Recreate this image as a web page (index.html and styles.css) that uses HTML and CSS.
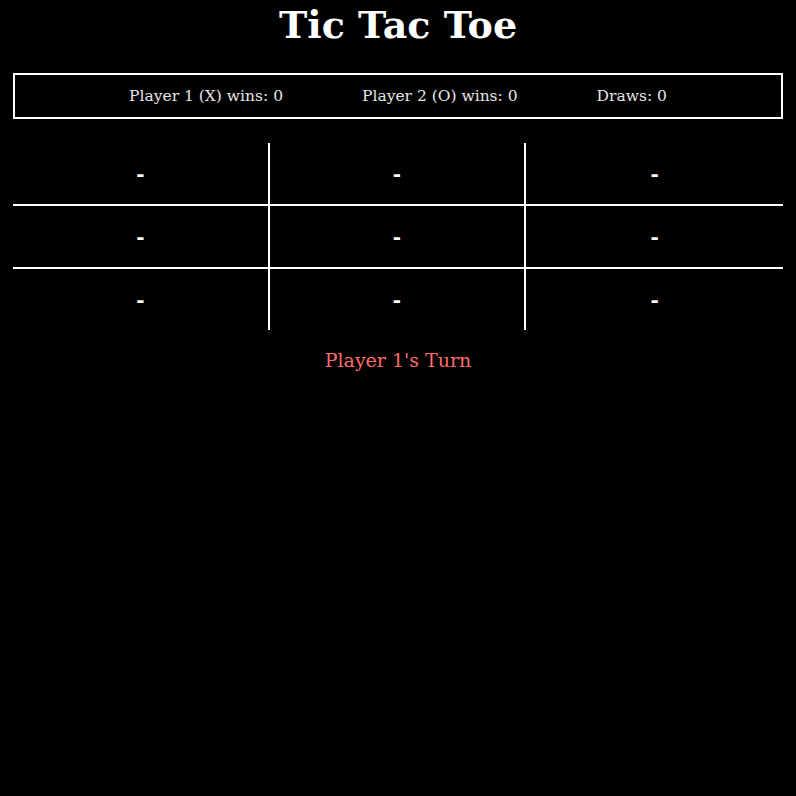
FILE: index.html
```html
<!DOCTYPE html>
<html>
<head>
<meta charset="utf-8">
<title>Tic Tac Toe</title>
<link rel="stylesheet" href="styles.css">
</head>
<body>
<div class="app">
  <h1 class="title">Tic Tac Toe</h1>
  <div class="scoreboard">
    <span class="score">Player 1 (X) wins: 0</span>
    <span class="score">Player 2 (O) wins: 0</span>
    <span class="score">Draws: 0</span>
  </div>
  <div class="board">
    <div class="cell">-</div>
    <div class="cell">-</div>
    <div class="cell">-</div>
    <div class="cell">-</div>
    <div class="cell">-</div>
    <div class="cell">-</div>
    <div class="cell">-</div>
    <div class="cell">-</div>
    <div class="cell">-</div>
  </div>
  <div class="status">Player 1's Turn</div>
</div>
</body>
</html>
```
FILE: styles.css
```css
html, body {
  background: #000;
}
body {
  margin: 0;
  padding: 0 13px;
  font-family: "DejaVu Serif", serif;
  color: #fff;
}
.title {
  margin: 3px 0 0;
  text-align: center;
  font-size: 38px;
  font-weight: bold;
  line-height: 44px;
}
.scoreboard {
  margin-top: 26px;
  border: 2px solid #fff;
  height: 42px;
  display: flex;
  justify-content: center;
  align-items: center;
  gap: 79px;
  font-size: 15.5px;
  color: #e6e6e6;
}
.board {
  margin-top: 24px;
  display: grid;
  grid-template-columns: repeat(3, 1fr);
}
.cell {
  height: 61px;
  display: flex;
  align-items: center;
  justify-content: center;
  font-size: 20px;
  font-weight: bold;
  color: #fff;
}
.cell:nth-child(3n+1), .cell:nth-child(3n+2) {
  border-right: 2px solid #fff;
}
.cell:nth-child(-n+6) {
  border-bottom: 2px solid #fff;
}
.status {
  margin-top: 19px;
  text-align: center;
  font-size: 19px;
  color: #ff6b6b;
}
```
